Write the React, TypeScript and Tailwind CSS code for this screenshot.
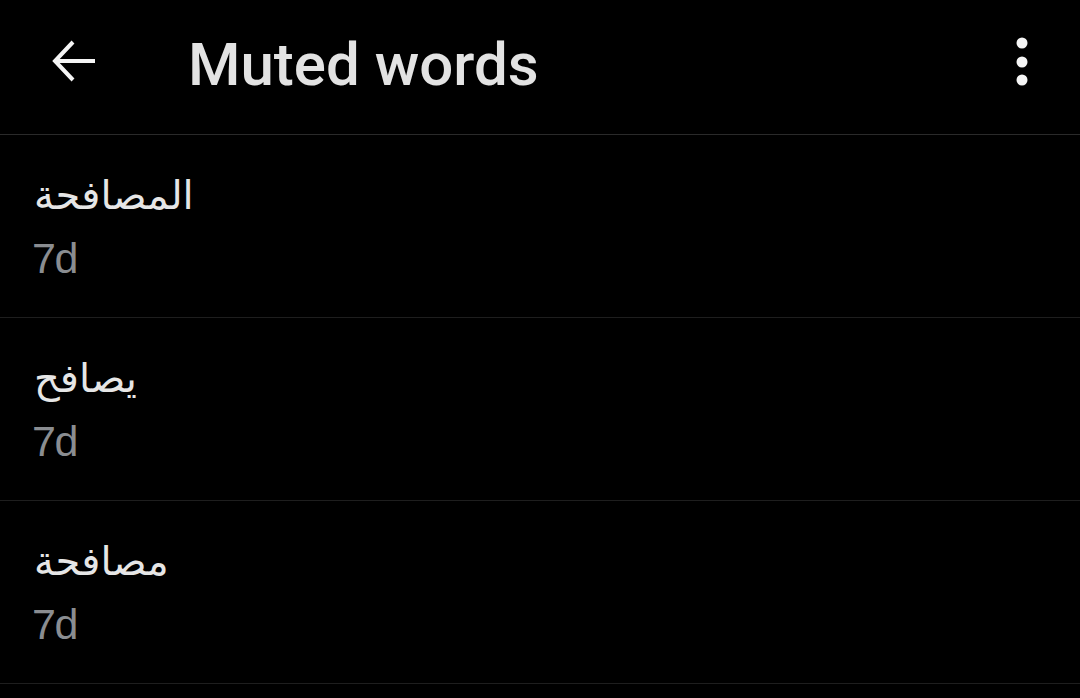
import React from "react";

const words = ["المصافحة", "يصافح", "مصافحة"];

const BackArrow = () => (
  <svg width="44" height="44" viewBox="0 0 44 44" fill="none" stroke="#f5f5f5" strokeWidth="4" strokeLinecap="square">
    <path d="M41 22H5" />
    <path d="M21 3L3 22L21 41" strokeLinecap="butt" />
  </svg>
);

const MoreDots = () => (
  <svg width="12" height="50" viewBox="0 0 12 50" fill="#f5f5f5">
    <circle cx="6" cy="6" r="5.5" />
    <circle cx="6" cy="25" r="5.5" />
    <circle cx="6" cy="43" r="5.5" />
  </svg>
);

export default function App() {
  return (
    <div className="w-[1080px] h-[698px] bg-black overflow-hidden font-['Roboto','Noto_Sans',sans-serif]">
      <header className="h-[135px] flex items-center border-b border-[#2a2a2a]">
        <div className="w-[190px] pl-[52px] flex items-center pb-[12px]">
          <BackArrow />
        </div>
        <h1 className="flex-1 text-[60px] font-medium text-[#e3e3e3] leading-none pb-1 -ml-[2px]">Muted words</h1>
        <div className="pr-[52px] flex items-center pb-[10px]">
          <MoreDots />
        </div>
      </header>
      <ul>
        {words.map((w) => (
          <li key={w} className="h-[183px] border-b border-[#1e1e1e] pl-[34px] flex flex-col justify-center">
            <span
              dir="rtl"
              className="self-start text-[40px] leading-[60px] text-[#e6e6e6] font-['DejaVu_Sans',sans-serif]"
            >
              {w}
            </span>
            <span className="text-[43px] leading-[58px] tracking-[-1.5px] text-[#8a8d91] font-['Liberation_Sans',sans-serif] -ml-[2px] pt-[4px]">7d</span>
          </li>
        ))}
      </ul>
    </div>
  );
}
